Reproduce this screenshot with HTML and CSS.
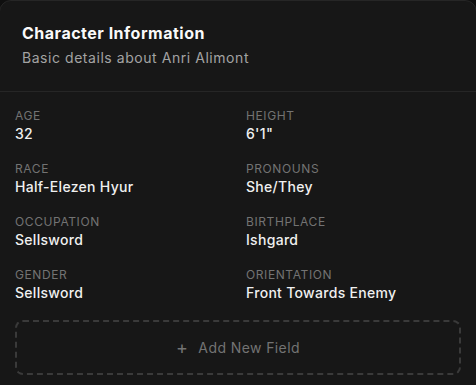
FILE: index.html
```html
<!DOCTYPE html>
<html lang="en">
<head>
  <meta charset="UTF-8" />
  <title>Character Information</title>
  <link rel="stylesheet" href="styles.css">
</head>
<body>
  <div class="card">
    <div class="card-header">
      <h3>Character Information</h3>
      <p>Basic details about Anri Alimont</p>
    </div>

    <div class="card-body">
      <div class="fields">
        <div class="field">
          <div class="label">Age</div>
          <div class="value">32</div>
        </div>
        <div class="field">
          <div class="label">Height</div>
          <div class="value">6'1"</div>
        </div>
        <div class="field">
          <div class="label">Race</div>
          <div class="value">Half-Elezen Hyur</div>
        </div>
        <div class="field">
          <div class="label">Pronouns</div>
          <div class="value">She/They</div>
        </div>
        <div class="field">
          <div class="label">Occupation</div>
          <div class="value">Sellsword</div>
        </div>
        <div class="field">
          <div class="label">Birthplace</div>
          <div class="value">Ishgard</div>
        </div>
        <div class="field">
          <div class="label">Gender</div>
          <div class="value">Sellsword</div>
        </div>
        <div class="field">
          <div class="label">Orientation</div>
          <div class="value">Front Towards Enemy</div>
        </div>
      </div>

      <button class="add-field">
        <span class="plus">+</span>
        Add New Field
      </button>
    </div>
  </div>
</body>
</html>
```

FILE: styles.css
```css
body {
  margin: 0;
  font-family: Inter, 'Noto Sans', sans-serif;
  background: #0f0f0f;
  color: #e5e5e5;
  overflow: hidden;
}

.card {
  margin: 0 -1px;
  background: #171717;
  border: 1px solid #262626;
  border-radius: 12px;
  height: 420px;
}

.card-header {
  padding: 20px 22px 23px;
  border-bottom: 1px solid #262626;
}

.card-header h3 {
  margin: 0;
  font-size: 16px;
  line-height: 24px;
  font-weight: 700;
  letter-spacing: 0.5px;
  color: #fafafa;
}

.card-header p {
  margin: 3px 0 0;
  font-size: 14px;
  line-height: 20px;
  letter-spacing: 0.55px;
  color: #a3a3a3;
}

.card-body {
  padding: 16px 15px;
}

.fields {
  display: grid;
  grid-template-columns: 1fr 1fr;
  column-gap: 16px;
  row-gap: 17px;
}

.label {
  font-size: 12px;
  line-height: 16px;
  text-transform: uppercase;
  letter-spacing: 0.6px;
  color: #737373;
}

.value {
  font-size: 14px;
  line-height: 20px;
  font-weight: 500;
  letter-spacing: 0.3px;
  color: #f0f0f0;
}

.add-field {
  display: flex;
  justify-content: center;
  align-items: center;
  gap: 10px;
  width: 100%;
  height: 55px;
  margin-top: 17px;
  background: transparent;
  border: 2px dashed #3a3a3a;
  border-radius: 8px;
  font-family: inherit;
  font-size: 14px;
  letter-spacing: 0.4px;
  color: #737373;
}

.plus {
  font-size: 18px;
  line-height: 1;
}
```
